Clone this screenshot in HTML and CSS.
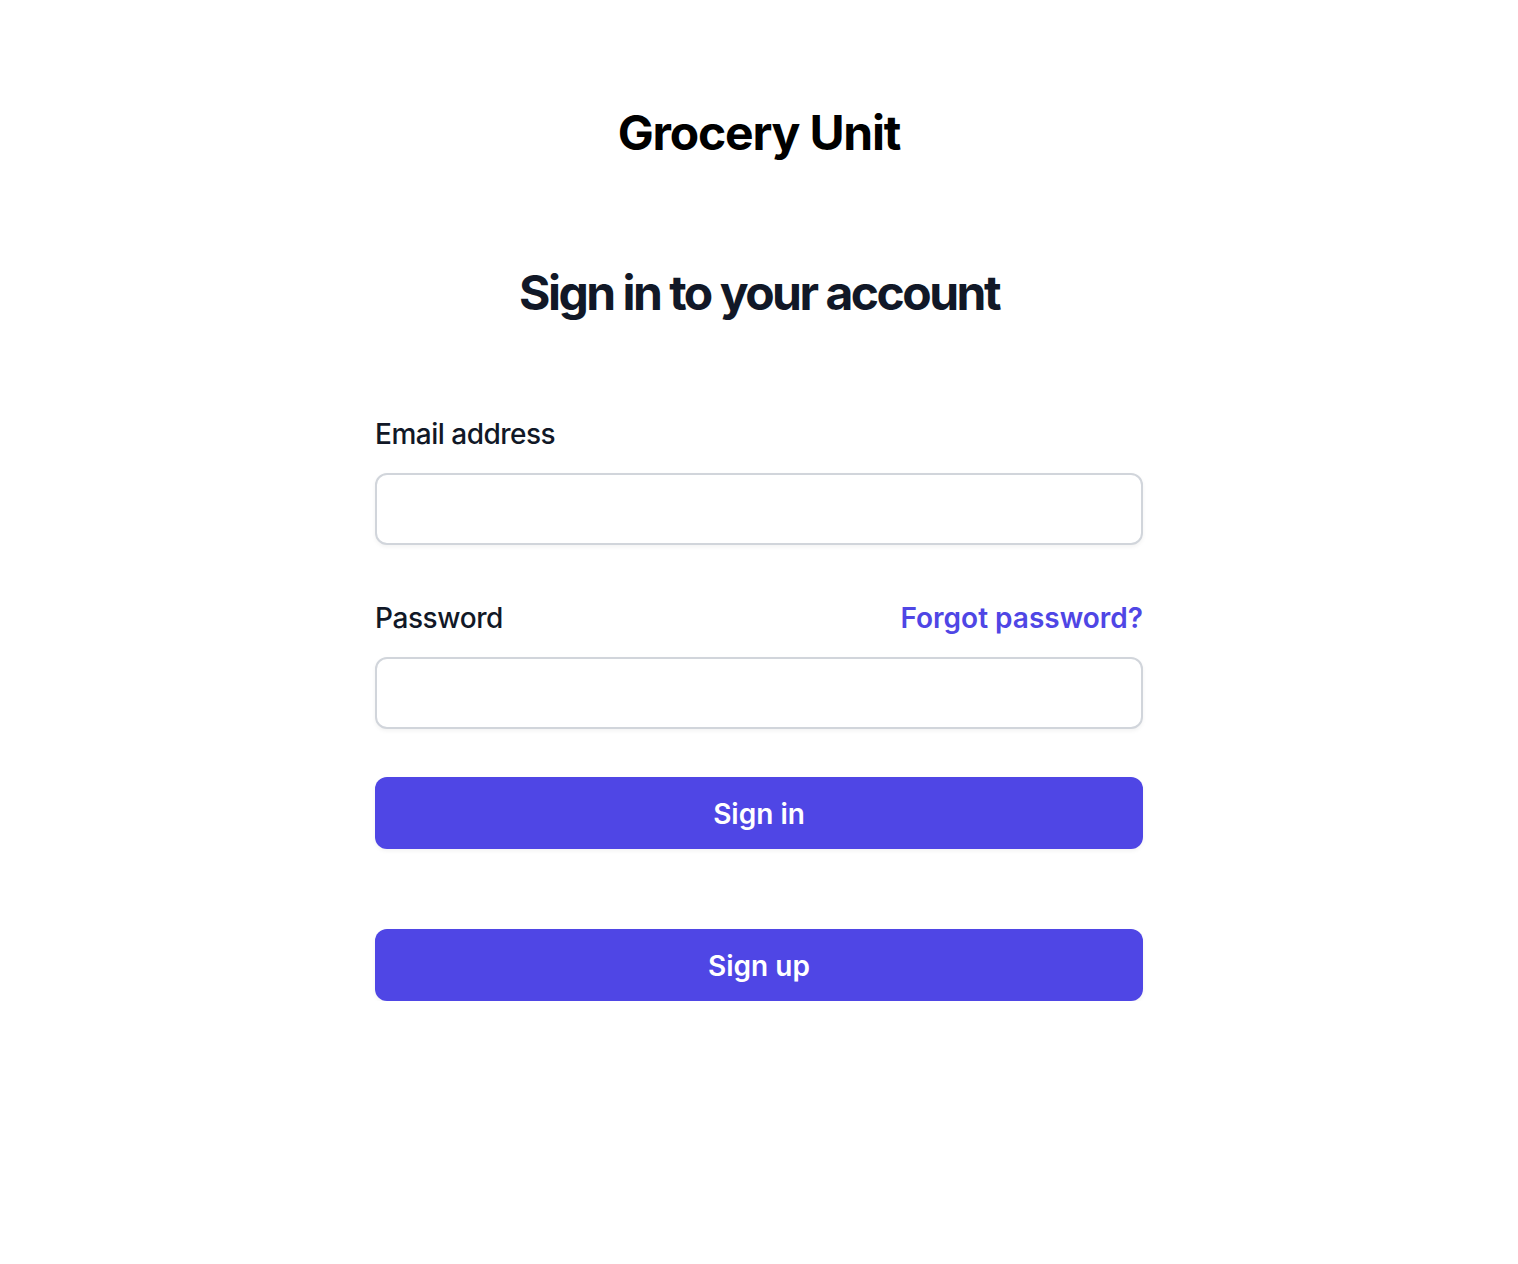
FILE: index.html
```html
<!DOCTYPE html>
<html lang="en">
<head>
<meta charset="utf-8">
<title>Grocery Unit - Sign in</title>
<link rel="stylesheet" href="styles.css">
</head>
<body>
<main class="page">
  <h1 class="brand">Grocery Unit</h1>
  <h2 class="heading">Sign in to your account</h2>
  <div class="panel">
    <form class="form">
      <div class="field">
        <label class="label" for="email">Email address</label>
        <input class="input" id="email" type="email" name="email">
      </div>
      <div class="field">
        <div class="label-row">
          <label class="label label-pw" for="password">Password</label>
          <a class="link" href="#">Forgot password?</a>
        </div>
        <input class="input" id="password" type="password" name="password">
      </div>
      <button class="btn" type="submit">Sign in</button>
    </form>
    <button class="btn btn-signup" type="button">Sign up</button>
  </div>
</main>
</body>
</html>
```
FILE: styles.css
```css
* { box-sizing: border-box; }
html, body { margin: 0; padding: 0; background: #ffffff; }
body {
  font-family: Inter, "Noto Sans", "Liberation Sans", sans-serif;
  color: #111827;
}
.page {
  display: flex;
  flex-direction: column;
  align-items: center;
  padding-top: 97px;
}
.brand {
  margin: 0;
  font-size: 48px;
  line-height: 72px;
  font-weight: 700;
  letter-spacing: -1.2px;
  color: #000000;
  text-align: center;
}
.heading {
  margin: 88px 0 0;
  font-size: 48px;
  line-height: 72px;
  font-weight: 700;
  letter-spacing: -2.5px;
  color: #111827;
  text-align: center;
}
.panel {
  width: 768px;
  margin-top: 80px;
}
.form {
  display: flex;
  flex-direction: column;
  gap: 48px;
}
.field {
  display: flex;
  flex-direction: column;
  gap: 16px;
}
.label-row {
  display: flex;
  justify-content: space-between;
  align-items: center;
}
.label {
  display: block;
  height: 48px;
  padding-top: 1px;
  font-size: 28px;
  line-height: 48px;
  font-weight: 500;
  letter-spacing: -0.5px;
  color: #111827;
}
.label-pw {
  letter-spacing: -0.4px;
}
.link {
  display: block;
  height: 48px;
  padding-top: 1px;
  font-size: 28px;
  line-height: 48px;
  font-weight: 600;
  color: #4f46e5;
  text-decoration: none;
}
.input {
  display: block;
  width: 100%;
  height: 72px;
  border: 2px solid #d1d5db;
  border-radius: 12px;
  background: #ffffff;
  box-shadow: 0 2px 4px rgba(0,0,0,0.05);
  font-size: 28px;
  padding: 0 20px;
  outline: none;
}
.btn {
  display: flex;
  justify-content: center;
  align-items: center;
  width: 100%;
  height: 72px;
  padding: 1px 0 0;
  border: 0;
  border-radius: 12px;
  background: #4f46e5;
  color: #ffffff;
  font-family: Inter, "Noto Sans", "Liberation Sans", sans-serif;
  font-size: 28px;
  line-height: 48px;
  font-weight: 600;
  box-shadow: 0 2px 4px rgba(0,0,0,0.05);
  cursor: pointer;
}
.btn-signup {
  margin-top: 80px;
}
```
